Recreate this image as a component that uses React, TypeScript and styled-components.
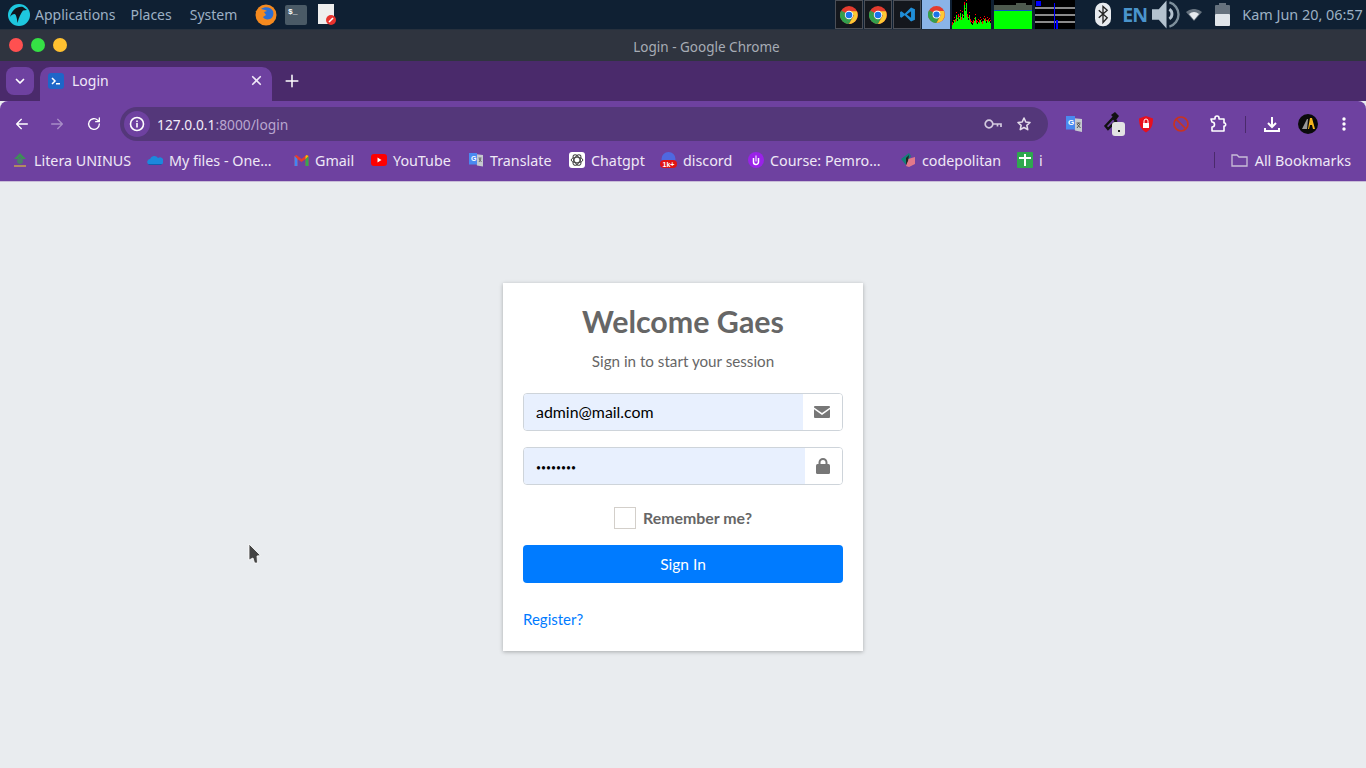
import React from "react";
import styled, { createGlobalStyle } from "styled-components";

const Global = createGlobalStyle`
  html, body { margin: 0; padding: 0; height: 100%; overflow: hidden; background: #e9ecef; }
  * { box-sizing: border-box; }
`;
const UI = `"Noto Sans", "Open Sans", sans-serif`;
const CARD = `Lato, "Open Sans", sans-serif`;

const Page = styled.div`display:flex;flex-direction:column;width:1366px;height:768px;position:relative;overflow:hidden;`;

const Panel = styled.header`height:30px;flex:none;background:#0f2033;display:flex;align-items:center;font:14px ${UI};color:#9db0c4;border-bottom:1px solid #26303d;`;
const PanelLogo = styled.span`display:flex;margin-left:8px;margin-right:5px;`;
const MenuItem = styled.span<{ $gap: number }>`margin-right:${p => p.$gap}px;white-space:nowrap;`;
const Launcher = styled.span<{ $gap: number }>`display:flex;margin-right:${p => p.$gap}px;`;
const TaskGroup = styled.div`display:flex;margin-left:499px;gap:1px;align-items:center;`;
const Task = styled.span<{ $active?: boolean }>`width:28px;height:29px;display:flex;align-items:center;justify-content:center;background:${p => p.$active ? "#8ab4e8" : "#14171d"};border:1px solid ${p => p.$active ? "#8ab4e8" : "#4b4f57"};`;
const Monitor = styled.span<{ $ml: number }>`display:flex;margin-left:${p => p.$ml}px;`;
const Tray = styled.span<{ $ml: number }>`display:flex;margin-left:${p => p.$ml}px;align-items:center;`;
const Lang = styled.span`margin-left:11px;width:25px;font:bold 19.5px ${UI};letter-spacing:-1px;color:#4a94cc;`;
const Clock = styled.span`margin-left:12px;white-space:nowrap;font-size:14.4px;color:#9db0c4;`;

const TitleBar = styled.div`height:31px;flex:none;background:#2f343f;display:flex;align-items:center;position:relative;justify-content:center;padding:2px 0 0 47px;font:13.5px ${UI};color:#a7acb5;`;
const Lights = styled.div`position:absolute;left:9px;top:8px;display:flex;gap:8px;`;
const Light = styled.span<{ $c: string }>`width:14px;height:14px;border-radius:50%;background:${p => p.$c};`;

const TabStrip = styled.div`height:40px;flex:none;background:#4a2a6b;display:flex;align-items:flex-end;padding-left:6px;`;
const TabMenu = styled.div`width:28px;height:28px;border-radius:8px;background:#6e41a0;margin-bottom:6px;display:flex;align-items:center;justify-content:center;margin-right:6px;`;
const Tab = styled.div`width:232px;height:34px;background:#6e41a0;border-radius:10px 10px 0 0;display:flex;align-items:center;padding:0 9px 7px 8px;color:#f0e8f8;font:14px ${UI};`;
const TabLabel = styled.span`flex:1;margin-left:8px;`;
const NewTab = styled.span`margin:0 0 6px 13px;height:28px;display:flex;align-items:center;`;

const Toolbar = styled.div`height:44px;flex:none;background:#6e41a0;display:flex;align-items:center;border-radius:8px 8px 0 0;padding-top:2px;`;
const NavBtn = styled.span<{ $ml: number }>`display:flex;margin-left:${p => p.$ml}px;`;
const Omni = styled.div`width:928px;height:34px;margin-left:18px;border-radius:17px;background:#54377a;display:flex;align-items:center;font:13.8px ${UI};color:#f2ecf8;padding-left:4px;`;
const InfoWrap = styled.span`width:26px;height:26px;border-radius:50%;background:#6e41a0;display:flex;align-items:center;justify-content:center;margin-right:7px;`;
const Host = styled.span`flex:1;`;
const Faded = styled.span`color:#b9a6cf;`;
const OmniIcon = styled.span<{ $mr: number }>`display:flex;margin-right:${p => p.$mr}px;`;
const ToolIcon = styled.span<{ $ml: number }>`display:flex;margin-left:${p => p.$ml}px;`;
const Sep = styled.span`width:1px;height:17px;background:#4a2a6b;margin-left:18px;`;

const Bookmarks = styled.div`height:37px;flex:none;background:#6e41a0;display:flex;align-items:center;padding:0 15px 6px 12px;font:14.3px ${UI};color:#efe8f6;border-bottom:1px solid #c9bdd8;`;
const Mark = styled.span<{ $w: number }>`display:flex;align-items:center;gap:6px;width:${p => p.$w}px;white-space:nowrap;flex:none;`;
const MarkEnd = styled.span`margin-left:auto;display:flex;align-items:center;gap:7px;`;
const MarkSep = styled.span`width:1px;height:16px;background:#4a2a6b;margin-right:9px;`;

const Main = styled.main`flex:1;background:#e9ecef;display:flex;justify-content:center;padding-top:101px;`;
const Card = styled.section`width:360px;height:368px;background:#fff;box-shadow:0 1px 4px rgba(0,0,0,.28);padding:18px 20px 0;font-family:${CARD};color:#666;display:flex;flex-direction:column;`;
const Title = styled.h1`margin:0;text-align:center;font:bold 30.4px/40px ${CARD};color:#666;`;
const Sub = styled.p`margin:10px 0 0;text-align:center;font:15.2px/20px ${CARD};color:#666;`;
const Group = styled.div<{ $mt: number }>`display:flex;height:38px;margin-top:${p => p.$mt}px;border:1px solid #ced4da;border-radius:4px;overflow:hidden;`;
const Field = styled.input<{ $dots?: boolean }>`flex:1;min-width:0;border:0;outline:0;background:#e8f0fe;padding:${p => p.$dots ? "3px 12px 0" : "0 12px 2px"};font:${p => p.$dots ? "8.6px" : "15.9px"} ${CARD};color:#000;`;
const Addon = styled.span<{ $w: number }>`width:${p => p.$w}px;flex:none;display:flex;align-items:center;justify-content:center;background:#fff;padding-right:2px;`;
const RememberRow = styled.label`display:flex;justify-content:center;align-items:center;gap:7px;margin-top:22px;height:22px;`;
const Check = styled.span`width:22px;height:22px;border:1px solid #d3cfca;background:#fff;`;
const RememberText = styled.span`font:bold 15.9px ${CARD};color:#666;margin-bottom:2px;`;
const Submit = styled.button`height:38px;margin-top:16px;border:0;border-radius:4px;background:#007bff;color:#fff;font:15.5px ${CARD};`;
const RegisterLink = styled.a`margin-top:26px;font:15px/20px ${CARD};color:#007bff;text-decoration:none;align-self:flex-start;`;
const Cursor = styled.svg`position:absolute;left:248px;top:543px;`;

const ChromeIcon = ({ s = 18 }: { s?: number }) => (
  <svg width={s} height={s} viewBox="0 0 24 24">
    <circle cx="12" cy="12" r="12" fill="#e33b2e" />
    <path d="M12 24 1.6 6A12 12 0 0 0 12 24z" fill="#2fa24e" />
    <path d="M1.6 6 8 17 12 24 18 12H12z" fill="#2fa24e" />
    <path d="M12 24 18.5 12.5 12 7h10.4A12 12 0 0 1 12 24z" fill="#fcc934" />
    <circle cx="12" cy="12" r="5.6" fill="#fff" />
    <circle cx="12" cy="12" r="4.4" fill="#1a73e8" />
  </svg>
);
const Stroke = ({ w = 16, h = 16, c = "#fff", sw = 2, d, vb = "0 0 24 24" }: { w?: number; h?: number; c?: string; sw?: number; d: string; vb?: string }) => (
  <svg width={w} height={h} viewBox={vb} fill="none" stroke={c} strokeWidth={sw} strokeLinecap="round" strokeLinejoin="round"><path d={d} /></svg>
);
const BAR = [4,6,9,7,14,8,12,10,16,9,15,11,24,18,26,12,9,14,7,5,4,6,8,12,6,5,7,6,9,7,5,8,10,8,6,9,7,8,6];
const Cpu = () => (
  <svg width={39} height={29} viewBox="0 0 39 29"><rect width="39" height="29" fill="#000" />
    {BAR.map((h, i) => <g key={i}><rect x={i} y={29 - h} width="1" height={h} fill="#00ff00" /><rect x={i} y={29 - h - 3} width="1" height={i % 3 === 0 ? 3 : 1} fill="#ff0000" /></g>)}
  </svg>
);
const Mem = () => (
  <svg width={38} height={29} viewBox="0 0 38 29"><rect width="38" height="29" fill="#000" />
    <rect y="5" width="38" height="5" fill="#4e5a4e" /><rect x="22" y="3" width="10" height="3" fill="#4e5a4e" />
    <rect y="10" width="38" height="1" fill="#0a50c8" /><rect y="11" width="38" height="18" fill="#00ff00" />
  </svg>
);
const Net = () => (
  <svg width={40} height={29} viewBox="0 0 40 29"><rect width="40" height="29" fill="#000" />
    <rect y="7" width="40" height="2" fill="#8a8a8a" /><rect y="14" width="40" height="2" fill="#8a8a8a" /><rect y="21" width="40" height="2" fill="#8a8a8a" />
    <rect x="1" y="1" width="5" height="5" fill="#0000ff" /><rect x="19" y="3" width="1" height="26" fill="#0000ff" /><rect x="21" y="20" width="2" height="9" fill="#0000ff" />
  </svg>
);

const Fav = {
  litera: <svg width="16" height="16" viewBox="0 0 16 16"><path d="M8 1 14 7H10L8 5 6 7H2z" fill="#3d8f57"/><circle cx="8" cy="9" r="3" fill="#4a7f6a"/><rect x="2" y="13" width="12" height="2" fill="#b08a63"/></svg>,
  drive: <svg width="16" height="16" viewBox="0 0 16 16"><path d="M1 12a3 3 0 0 1 2-5 4.500 4.500 0 0 1 8-1 3.500 3.500 0 0 1 4 6z" fill="#1c88dc"/><path d="M1 12h14l-1 1H2z" fill="#0f5fb0"/></svg>,
  gmail: <svg width="15" height="12" viewBox="0 0 14 12"><path d="M0 2v10h3V5l4 3 4-3v7h3V2l-2-1-5 4-5-4z" fill="#e53d2f"/><path d="M0 2v10h3V5z" fill="#4285f4"/><path d="M11 5v7h3V2z" fill="#34a853"/><path d="M12 1l2 1-3 3V2z" fill="#fbbc04"/></svg>,
  yt: <svg width="16" height="12" viewBox="0 0 16 12"><rect width="16" height="12" rx="3" fill="#f00"/><path d="M6.500 3.500v5l4-2.500z" fill="#fff"/></svg>,
  translate: <svg width="16" height="16" viewBox="0 0 16 16"><path d="M6 2 15 3v11.500l-6-1z" fill="#c5c9cf"/><path d="M1 1h8v11.500H1z" fill="#4a8af0"/><path d="M10.500 6h3M12 6v1M11 10l2-3M11 7l2.500 3" stroke="#555" strokeWidth=".8" fill="none"/><text x="3" y="9" fontSize="7" fill="#fff" fontFamily="Liberation Sans" fontWeight="700">G</text></svg>,
  gpt: <svg width="16" height="16" viewBox="0 0 16 16"><rect width="16" height="16" rx="3" fill="#fff"/><g fill="none" stroke="#444" strokeWidth="1">{[0, 60, 120].map(a => <ellipse key={a} cx="8" cy="8" rx="5.800" ry="2.800" transform={`rotate(${a} 8 8)`} />)}</g></svg>,
  discord: <svg width="17" height="16" viewBox="0 0 17 16"><circle cx="8.500" cy="7" r="7" fill="#4f68e0"/><rect y="8" width="17" height="8" rx="4" fill="#e11414"/><text x="8.500" y="15" fontSize="7" fontWeight="700" fill="#fff" textAnchor="middle" fontFamily="Liberation Sans">1k+</text></svg>,
  course: <svg width="16" height="16" viewBox="0 0 16 16"><circle cx="8" cy="8" r="8" fill="#9a22e8"/><path d="M5.500 6v4a2.500 2.500 0 0 0 5 0V6" fill="none" stroke="#fff" strokeWidth="1.500"/><rect x="7.500" y="3.500" width="1" height="6" fill="#fff"/></svg>,
  code: <svg width="16" height="16" viewBox="0 0 16 16"><path d="M1 7 9 1l2 3-5 9z" fill="#137f78"/><path d="M6 14l2-7 7-2v7l-6 3z" fill="#e2788a"/><path d="M6 6 9 3 8 9 6 13z" fill="#222"/></svg>,
  green: <svg width="16" height="16" viewBox="0 0 16 16"><rect width="16" height="16" rx="1" fill="#2fa84f"/><rect x="2" y="5" width="12" height="2" fill="#fff"/><rect x="7" y="2" width="2" height="12" fill="#fff"/></svg>,
};

const TranslateIcon = () => (
  <svg width="18" height="18" viewBox="0 0 18 18"><path d="M7 3 17 4v13l-7-1.500z" fill="#c5c9cf"/><path d="M1 1h9v13.500H1z" fill="#4a8af0"/><path d="M11.500 8h4M13.500 8v1M12 13l3-4M12 9l3.500 4" stroke="#555" strokeWidth="1" fill="none"/><text x="3" y="10" fontSize="8" fill="#fff" fontFamily="Liberation Sans" fontWeight="700">G</text></svg>
);

export default function App() {
  return (
    <Page>
      <Global />
      <Panel>
        <PanelLogo>
          <svg width="22" height="22" viewBox="0 0 22 22"><circle cx="11" cy="11" r="11" fill="#1ec8df"/><path d="M2 13C4 6 9 2 15 3l4 3-4 .5C13 9 11 13 9.500 19 9 14 8 10 6.500 10 5 10 3 11 2 13z" fill="#10141c"/></svg>
        </PanelLogo>
        <MenuItem $gap={15}>Applications</MenuItem>
        <MenuItem $gap={18}>Places</MenuItem>
        <MenuItem $gap={18}>System</MenuItem>
        <Launcher $gap={8}>
          <svg width="22" height="22" viewBox="0 0 22 22"><circle cx="11" cy="11" r="10.500" fill="#f58a1f"/><path d="M6 5c4-3 10-2 12 2 1 3 0 7-3 8-3 1-6 0-7-2l3-2-2-3 3-1-2-1z" fill="#2b6fd6"/><path d="M0 7l2 1 1-3 1 2z" fill="#f58a1f"/></svg>
        </Launcher>
        <Launcher $gap={11}>
          <svg width="22" height="20" viewBox="0 0 22 20"><rect width="22" height="20" rx="2" fill="#4a5a66"/><text x="3" y="9" fontSize="8" fontFamily="Liberation Mono" fill="#fff" fontWeight="700">$_</text></svg>
        </Launcher>
        <Launcher $gap={0}>
          <svg width="18" height="22" viewBox="0 0 18 22"><rect x="0" y="0" width="16" height="20" fill="#eeeeee"/><circle cx="13" cy="16" r="5" fill="#e8322d"/><path d="M11 18l4-4" stroke="#fff" strokeWidth="1.600"/></svg>
        </Launcher>
        <TaskGroup>
          <Task><ChromeIcon /></Task>
          <Task><ChromeIcon /></Task>
          <Task>
            <svg width="17" height="17" viewBox="0 0 24 24"><path d="M17 2 8 11 3.500 7.500 1.500 8.500v7l2 1L8 13l9 9 5.500-2.500v-15zM17 7.500v9L11 12z" fill="#1f8ed8"/></svg>
          </Task>
          <Task $active><ChromeIcon s={17} /></Task>
        </TaskGroup>
        <Monitor $ml={2}><Cpu /></Monitor>
        <Monitor $ml={3}><Mem /></Monitor>
        <Monitor $ml={3}><Net /></Monitor>
        <Tray $ml={20}>
          <svg width="16" height="25" viewBox="0 0 17 25"><rect width="17" height="25" rx="8" fill="#e8ebef"/><path d="M4 8l9 8-4.500 5V4l4.500 4-9 8" fill="none" stroke="#222" strokeWidth="1.400"/></svg>
        </Tray>
        <Lang>EN</Lang>
        <Tray $ml={5}>
          <svg width="29" height="29" viewBox="0 0 30 29"><path d="M0 9h7l8-9v29l-8-9H0z" fill="#b3c2cf"/><path d="M18 9a6 6 0 0 1 0 10" stroke="#b3c2cf" strokeWidth="3" fill="none"/><path d="M18 2a13 13 0 0 1 0 25" stroke="#7d8f9c" strokeWidth="2.500" fill="none"/></svg>
        </Tray>
        <Tray $ml={5}>
          <svg width="16" height="12" viewBox="0 0 16 12"><path d="M0 3a12 12 0 0 1 16 0l-8 9z" fill="#66727e"/><path d="M3 5a8 8 0 0 1 10 0l-5 6z" fill="#e8ebef"/></svg>
        </Tray>
        <Tray $ml={13}>
          <svg width="15" height="24" viewBox="0 0 15 24"><rect x="4" y="0" width="7" height="3" fill="#66727e"/><rect y="2" width="15" height="10" rx="1" fill="#66727e"/><rect y="11" width="15" height="12" rx="1" fill="#e0e5ea"/></svg>
        </Tray>
        <Clock>Kam Jun 20, 06:57</Clock>
      </Panel>
      <TitleBar>
        <Lights><Light $c="#ff5050" /><Light $c="#35e045" /><Light $c="#ffc130" /></Lights>
        Login - Google Chrome
      </TitleBar>
      <TabStrip>
        <TabMenu><Stroke w={12} h={12} sw={3.500} d="M5 9l7 7 7-7" /></TabMenu>
        <Tab>
          <svg width="16" height="16" viewBox="0 0 16 16"><rect width="16" height="16" rx="3" fill="#1e66c8"/><path d="M4 5l3 3-3 3" stroke="#fff" strokeWidth="1.500" fill="none"/><rect x="8" y="10" width="4" height="1.500" fill="#fff"/></svg>
          <TabLabel>Login</TabLabel>
          <Stroke w={13} h={13} sw={3} c="#f0e8f8" d="M5 5l14 14M19 5 5 19" />
        </Tab>
        <NewTab><Stroke w={14} h={14} sw={2.600} d="M12 2v20M2 12h20" /></NewTab>
      </TabStrip>
      <Toolbar>
        <NavBtn $ml={14}><Stroke d="M20 12H5M11 5l-7 7 7 7" /></NavBtn>
        <NavBtn $ml={19}><Stroke c="#a88dc7" d="M4 12h15M13 5l7 7-7 7" /></NavBtn>
        <NavBtn $ml={21}><Stroke d="M20 12a8 8 0 1 1-2.500-5.800L20 8.500M20 3v5.500h-5.500" /></NavBtn>
        <Omni>
          <InfoWrap>
            <svg width="16" height="16" viewBox="0 0 16 16"><circle cx="8" cy="8" r="6.500" fill="none" stroke="#fff" strokeWidth="1.600"/><rect x="7.200" y="7" width="1.600" height="4.500" fill="#fff"/><rect x="7.200" y="4.500" width="1.600" height="1.600" fill="#fff"/></svg>
          </InfoWrap>
          <Host>127.0.0.1<Faded>:8000/login</Faded></Host>
          <OmniIcon $mr={14}>
            <svg width="18" height="10" viewBox="0 0 18 10" fill="none" stroke="#d3cade" strokeWidth="1.700"><circle cx="5" cy="5" r="3.800"/><path d="M9 5h8v3M13.500 5v2.500"/></svg>
          </OmniIcon>
          <OmniIcon $mr={16}>
            <svg width="16" height="16" viewBox="0 0 24 24" fill="none" stroke="#e3dcea" strokeWidth="2.400" strokeLinejoin="round"><path d="M12 3l2.700 6 6.300.7-4.700 4.300 1.300 6.500L12 17.300 6.400 20.500 7.700 14 3 9.700 9.300 9z"/></svg>
          </OmniIcon>
        </Omni>
        <ToolIcon $ml={17}><TranslateIcon /></ToolIcon>
        <ToolIcon $ml={21}>
          <svg width="22" height="24" viewBox="0 0 22 24"><path d="M1.500 14 9 6l3 3-8 8z" fill="none" stroke="#111" strokeWidth="2.400"/><path d="M7 3l4-3 4 4-3 4z" fill="#111"/><rect x="8" y="10" width="13" height="14" rx="3" fill="#e3e3e3"/><rect x="14" y="18" width="2" height="2" fill="#222"/></svg>
        </ToolIcon>
        <ToolIcon $ml={12}>
          <svg width="16" height="17" viewBox="0 0 16 17"><path d="M8 0l7 2.500c0 7-2 11-7 14-5-3-7-7-7-14z" fill="#e8101e"/><rect x="5" y="7" width="6" height="5" fill="#fff"/><path d="M6 7V5a2 2 0 0 1 4 0v2" stroke="#fff" fill="none"/></svg>
        </ToolIcon>
        <ToolIcon $ml={19}>
          <svg width="16" height="16" viewBox="0 0 16 16" fill="none" stroke="#c9331f" strokeWidth="1.700"><circle cx="8" cy="8" r="7"/><path d="M3 3l10 10"/></svg>
        </ToolIcon>
        <ToolIcon $ml={20}>
          <svg width="18" height="18" viewBox="0 0 18 18" fill="none" stroke="#fff" strokeWidth="1.600" strokeLinejoin="round"><path d="M2 4h4V3a2 2 0 0 1 4 0v1h5v4h1a2 2 0 0 1 0 3h-1v5H3v-4a2 2 0 0 0 0-5z"/></svg>
        </ToolIcon>
        <Sep />
        <ToolIcon $ml={17}>
          <svg width="18" height="18" viewBox="0 0 18 18" fill="none" stroke="#fff" strokeWidth="2"><path d="M9 2v9M5 8l4 4 4-4M2 13v3h14v-3"/></svg>
        </ToolIcon>
        <ToolIcon $ml={17}>
          <svg width="20" height="20" viewBox="0 0 20 20"><circle cx="10" cy="10" r="10" fill="#0a0a0a"/><path d="M4 15 9 5h1l-1 10z" fill="#9a9a9a"/><path d="M10 15 12 4h2l3 11h-2l-1-4h-2l-1 4z" fill="#f5b41c"/></svg>
        </ToolIcon>
        <ToolIcon $ml={24}>
          <svg width="4" height="14" viewBox="0 0 4 14" fill="#fff"><circle cx="2" cy="2" r="1.700"/><circle cx="2" cy="7" r="1.700"/><circle cx="2" cy="12" r="1.700"/></svg>
        </ToolIcon>
      </Toolbar>
      <Bookmarks>
        <Mark $w={135}>{Fav.litera}Litera UNINUS</Mark>
        <Mark $w={147}>{Fav.drive}My files - One…</Mark>
        <Mark $w={77}>{Fav.gmail}Gmail</Mark>
        <Mark $w={97}>{Fav.yt}YouTube</Mark>
        <Mark $w={101}>{Fav.translate}Translate</Mark>
        <Mark $w={91}>{Fav.gpt}Chatgpt</Mark>
        <Mark $w={88}>{Fav.discord}discord</Mark>
        <Mark $w={152}>{Fav.course}Course: Pemro…</Mark>
        <Mark $w={117}>{Fav.code}codepolitan</Mark>
        <Mark $w={30}>{Fav.green}i</Mark>
        <MarkEnd>
          <MarkSep />
          <svg width="17" height="14" viewBox="0 0 17 14" fill="none" stroke="#c9bdd8" strokeWidth="1.300"><path d="M1 2h5l2 2h8v9H1z"/></svg>
          All Bookmarks
        </MarkEnd>
      </Bookmarks>
      <Main>
        <Card>
          <Title>Welcome Gaes</Title>
          <Sub>Sign in to start your session</Sub>
          <Group $mt={22}>
            <Field readOnly value="admin@mail.com" />
            <Addon $w={39}>
              <svg width="16" height="12" viewBox="0 0 16 12" fill="#777"><path d="M1 0h14a1 1 0 0 1 1 1v.5L8 7 0 1.500V1a1 1 0 0 1 1-1z"/><path d="M0 3.300V11a1 1 0 0 0 1 1h14a1 1 0 0 0 1-1V3.300L8 9z"/></svg>
            </Addon>
          </Group>
          <Group $mt={16}>
            <Field $dots readOnly type="password" value="password" />
            <Addon $w={37}>
              <svg width="14" height="16" viewBox="0 0 14 16"><rect y="6" width="14" height="10" rx="1.500" fill="#777"/><path d="M3.500 7V4.500a3.500 3.500 0 0 1 7 0V7" fill="none" stroke="#777" strokeWidth="2"/></svg>
            </Addon>
          </Group>
          <RememberRow><Check /><RememberText>Remember me?</RememberText></RememberRow>
          <Submit>Sign In</Submit>
          <RegisterLink href="#">Register?</RegisterLink>
        </Card>
      </Main>
      <Cursor width="14" height="22" viewBox="0 0 14 22"><path d="M1 1 12.500 12.500 9 13 9.500 20 6.500 20 5 15 1 17z" fill="#444" stroke="#fff" strokeWidth=".8"/></Cursor>
    </Page>
  );
}
